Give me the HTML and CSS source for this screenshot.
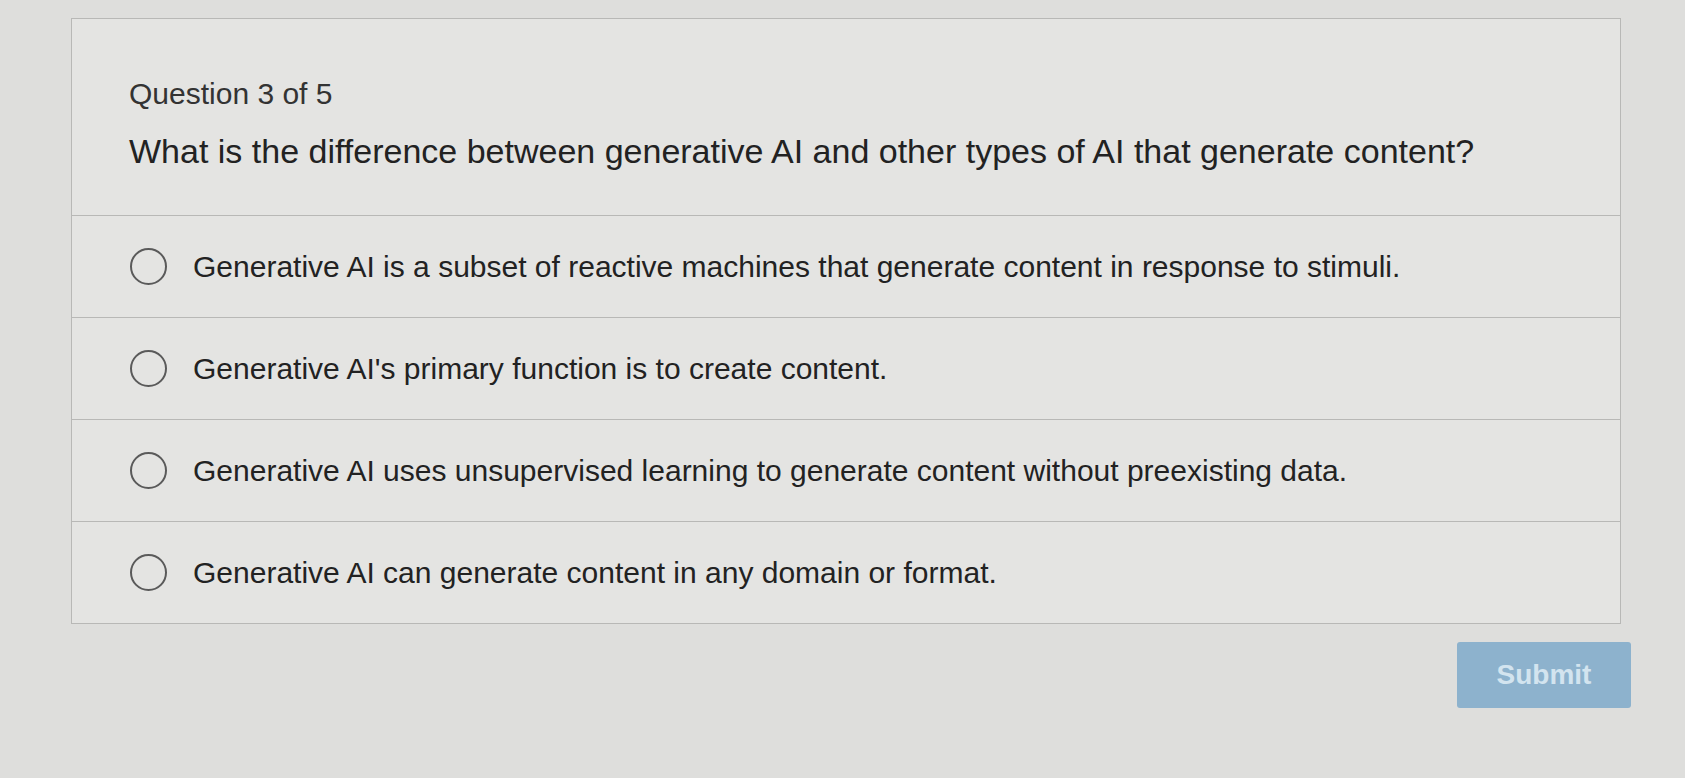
FILE: index.html
```html
<!DOCTYPE html>
<html lang="en">

<head>
    <meta charset="UTF-8">
    <meta name="viewport" content="width=device-width, initial-scale=1.0">
    <title>Quiz</title>
    <link rel="stylesheet" href="styles.css">
</head>

<body>
    <div class="quiz">
        <div class="card">
            <div class="head">
                <div class="count">Question 3 of 5</div>
                <div class="question">What is the difference between generative AI and other types of AI that generate content?</div>
            </div>
            <label class="option">
                <input type="radio" name="answer">
                <span class="dot"></span>
                <span>Generative AI is a subset of reactive machines that generate content in response to stimuli.</span>
            </label>
            <label class="option">
                <input type="radio" name="answer">
                <span class="dot"></span>
                <span>Generative AI's primary function is to create content.</span>
            </label>
            <label class="option">
                <input type="radio" name="answer">
                <span class="dot"></span>
                <span>Generative AI uses unsupervised learning to generate content without preexisting data.</span>
            </label>
            <label class="option">
                <input type="radio" name="answer">
                <span class="dot"></span>
                <span>Generative AI can generate content in any domain or format.</span>
            </label>
        </div>
        <div class="actions">
            <button class="submit" disabled>Submit</button>
        </div>
    </div>
</body>

</html>
```

FILE: styles.css
```css
body {
    margin: 0;
    background: #dededc;
    font-family: "Liberation Sans", Arial, sans-serif;
    color: #222;
}

.quiz {
    width: 1550px;
    padding: 18px 0 0 71px;
}

.card {
    background: #e4e4e2;
    border: 1px solid #b8b8b6;
}

.head {
    height: 196px;
    box-sizing: border-box;
    padding: 58px 0 0 57px;
}

.count {
    font-size: 30px;
    color: #333;
}

.question {
    margin-top: 21px;
    font-size: 34px;
}

.option {
    display: flex;
    align-items: center;
    gap: 26px;
    height: 101px;
    padding-left: 58px;
    border-top: 1px solid #b8b8b6;
    font-size: 30px;
    cursor: pointer;
}

.option input {
    display: none;
}

.dot {
    width: 33px;
    height: 33px;
    border: 2px solid #5a5a5a;
    border-radius: 50%;
    flex-shrink: 0;
}

.actions {
    display: flex;
    justify-content: flex-end;
    margin-top: 18px;
    margin-right: -10px;
}

.submit {
    width: 174px;
    height: 66px;
    border: none;
    border-radius: 3px;
    background: #8db2cd;
    color: #d3e4ef;
    font-family: inherit;
    font-size: 28px;
    font-weight: bold;
}
```
